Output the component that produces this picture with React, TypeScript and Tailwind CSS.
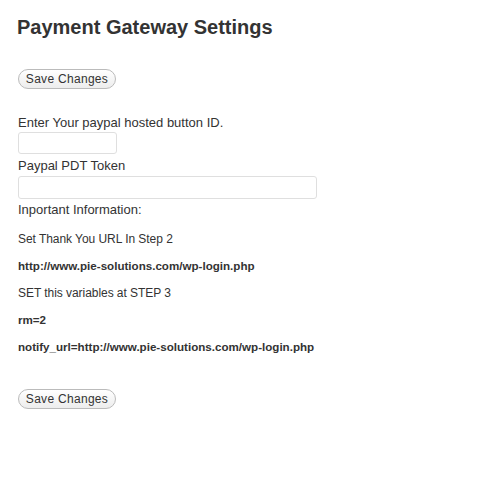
import React from "react";

const SaveButton: React.FC = () => (
  <button
    type="button"
    className="h-[20px] w-[98px] rounded-full border border-[#bbbbbb] bg-gradient-to-b from-white to-[#ededed] text-[12px] leading-[18px] tracking-[0.3px] text-[#333333]"
  >
    Save Changes
  </button>
);

const App: React.FC = () => {
  return (
    <div className="min-h-[489px] w-[492px] bg-white px-[18px] pt-[14px] font-['Liberation_Sans',Arial,sans-serif] text-[#333333]">
      <h2 className="-ml-px text-[20px] font-bold leading-[26px] text-[#333333]">
        Payment Gateway Settings
      </h2>

      <div className="mt-[26px]">
        <SaveButton />
      </div>

      <form className="mt-[25px] text-[13px] leading-[16px]">
        <div>Enter Your paypal hosted button ID.</div>
        <input
          type="text"
          className="mt-px block h-[22px] w-[99px] rounded-[3px] border border-[#dfdfdf] bg-white"
        />
        <div className="mt-[4px]">Paypal PDT Token</div>
        <input
          type="text"
          className="mt-[2px] block h-[23px] w-[299px] rounded-[3px] border border-[#dfdfdf] bg-white"
        />
        <div className="mt-[3px]">Inportant Information:</div>

        <div className="mt-[14px] text-[12px] leading-[14px]">
          <p className="tracking-[-0.05px]">Set Thank You URL In Step 2</p>
          <p className="mt-[13px] text-[11.6px] font-bold">http://www.pie-solutions.com/wp-login.php</p>
          <p className="mt-[13px] tracking-[-0.05px]">SET this variables at STEP 3</p>
          <p className="mt-[13px] text-[11.6px] font-bold">rm=2</p>
          <p className="mt-[13px] text-[11.6px] font-bold">notify_url=http://www.pie-solutions.com/wp-login.php</p>
        </div>
      </form>

      <div className="mt-[32px]">
        <SaveButton />
      </div>
    </div>
  );
};

export default App;
